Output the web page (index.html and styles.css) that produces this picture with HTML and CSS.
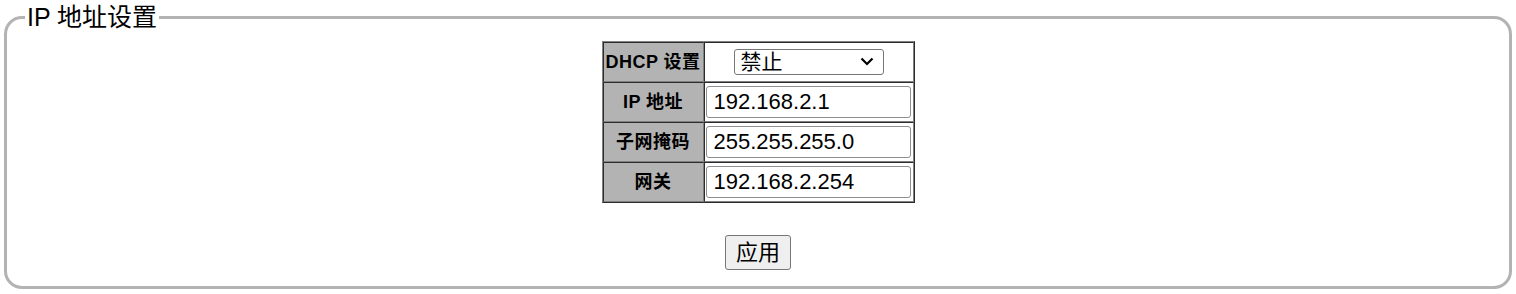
FILE: index.html
```html
<!DOCTYPE html>
<html lang="zh-CN">
<head>
    <meta charset="UTF-8">
    <title>IP 地址设置</title>
    <link rel="stylesheet" href="styles.css">
</head>
<body>
    <fieldset class="ip-box">
        <legend>IP 地址设置</legend>

        <table class="ip-table">
            <tr>
                <td class="label">DHCP 设置</td>
                <td class="value center">
                    <span class="select-wrap">
                        <select id="dhcp">
                            <option>禁止</option>
                            <option>允许</option>
                        </select>
                        <svg class="chevron" width="14" height="9" viewBox="0 0 14 9">
                            <path d="M1.5 1.5 L7 7 L12.5 1.5" fill="none" stroke="#000" stroke-width="2.2"/>
                        </svg>
                    </span>
                </td>
            </tr>
            <tr>
                <td class="label">IP 地址</td>
                <td class="value"><input type="text" id="ip" value="192.168.2.1"></td>
            </tr>
            <tr>
                <td class="label">子网掩码</td>
                <td class="value"><input type="text" id="mask" value="255.255.255.0"></td>
            </tr>
            <tr>
                <td class="label">网关</td>
                <td class="value"><input type="text" id="gateway" value="192.168.2.254"></td>
            </tr>
        </table>

        <div class="actions">
            <button>应用</button>
        </div>
    </fieldset>
</body>
</html>
```

FILE: styles.css
```css
body {
    margin: 0;
    font-family: "Liberation Sans", Arial, "Noto Sans CJK SC", sans-serif;
    background: #fff;
}

.ip-box {
    margin: 0 4px;
    height: 289px;
    box-sizing: border-box;
    border: 3px solid #b3b3b3;
    border-radius: 18px;
    padding: 0 10px;
}

.ip-box legend {
    font-size: 25px;
    line-height: 35px;
    padding: 0 2px;
    margin-left: 8px;
    color: #000;
}

.ip-table {
    margin: 6px auto 0 auto;
    border: 1px outset #808080;
    border-spacing: 0;
    width: 313px;
}

.ip-table td {
    border: 1px inset #808080;
    height: 36px;
    padding: 1px;
}

.label {
    background-color: #b3b3b3;
    font-size: 18px;
    line-height: 20px;
    letter-spacing: 0.5px;
    font-weight: bold;
    text-align: center;
    width: 97px;
    white-space: nowrap;
    color: #000;
}

.ip-table td.label {
    padding: 1px 1px 2px 1px;
    height: 35px;
}

.value input {
    width: 205px;
    height: 32px;
    box-sizing: border-box;
    font-size: 22px;
    font-family: "Liberation Sans", Arial, "Noto Sans CJK SC", sans-serif;
    border: 1px solid #8f8f8f;
    border-radius: 3px;
    padding: 1px 7px;
}

.center {
    text-align: center;
}

.select-wrap {
    position: relative;
    display: inline-block;
    vertical-align: middle;
}

.value select {
    display: block;
    width: 150px;
    height: 26px;
    font-size: 21px;
    line-height: 24px;
    font-family: "Liberation Sans", Arial, "Noto Sans CJK SC", sans-serif;
    border: 1px solid #767676;
    border-radius: 3px;
    padding: 0 6px;
    background: #fff;
    appearance: none;
    -webkit-appearance: none;
    color: #000;
}

.chevron {
    position: absolute;
    right: 10px;
    top: 8px;
    pointer-events: none;
}

.actions {
    text-align: center;
    margin-top: 32px;
}

.actions button {
    font-size: 22px;
    line-height: 27px;
    font-family: "Liberation Sans", Arial, "Noto Sans CJK SC", sans-serif;
    padding: 3px 10px;
    border: 1px solid #767676;
    border-radius: 3px;
    background: #efefef;
}
```
